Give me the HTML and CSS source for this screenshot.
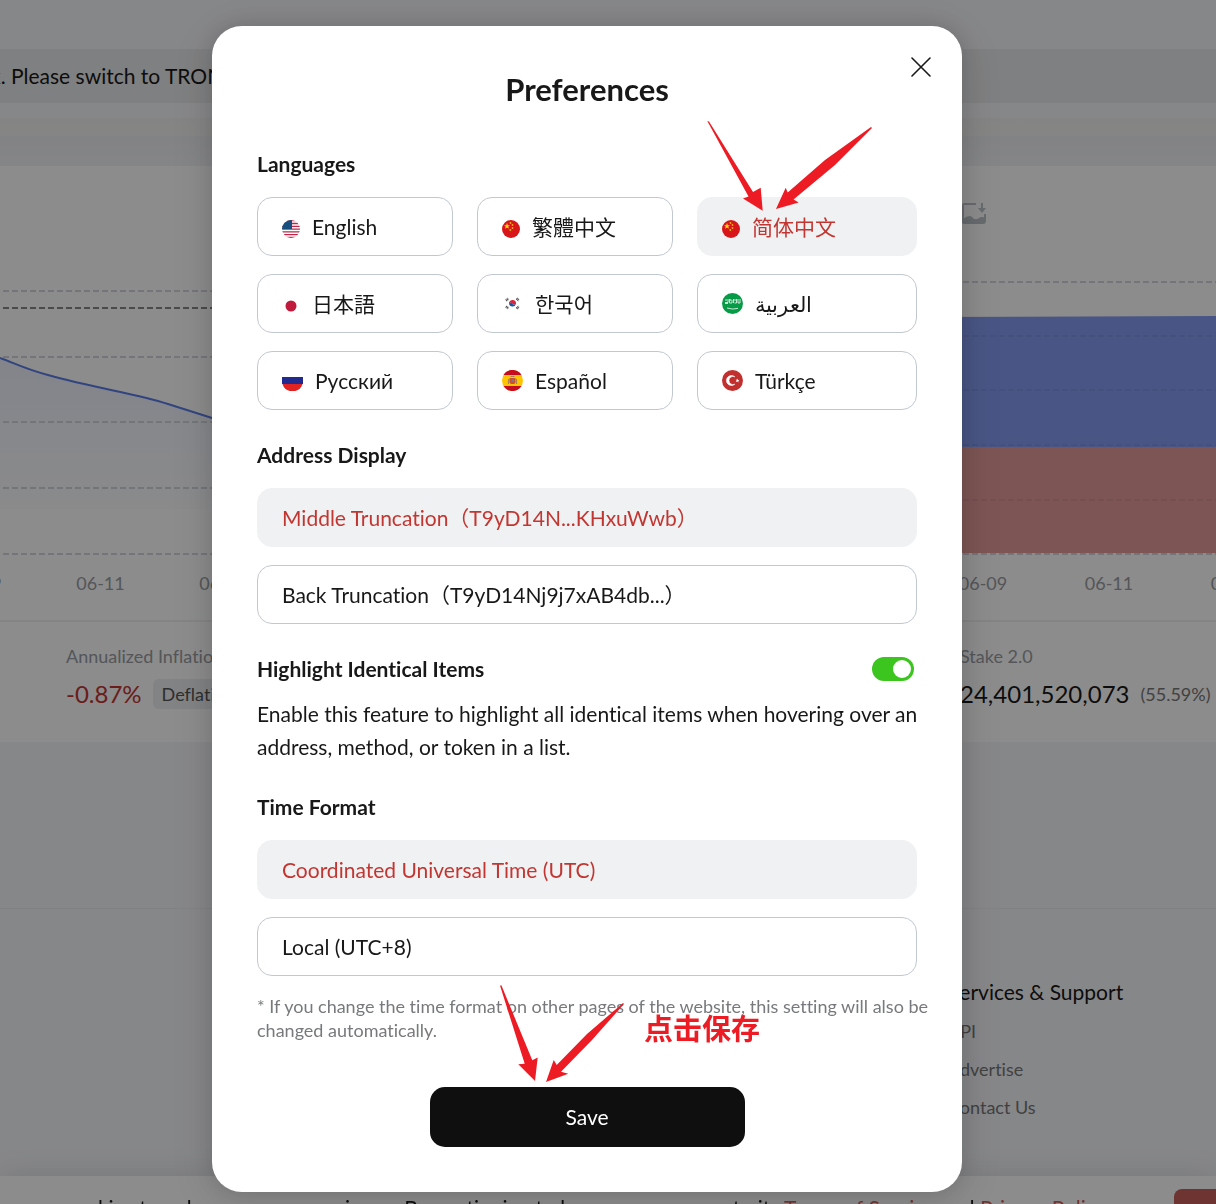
FILE: index.html
```html
<!DOCTYPE html>
<html lang="en">
<head>
<meta charset="utf-8">
<meta name="viewport" content="width=device-width, initial-scale=1">
<title>Preferences</title>
<link rel="stylesheet" href="styles.css">
</head>
<body>
<div class="page">
  <div class="notice">k. Please switch to TRON</div>
  <div class="header-edge"></div>
  <main class="charts">
    <section class="panel">
      <svg class="chart" viewBox="0 0 608 408" preserveAspectRatio="xMinYMin slice" aria-hidden="true">
        <defs>
          <linearGradient id="fade" x1="0" y1="0" x2="0" y2="1">
            <stop offset="0" stop-color="#5c7df0" stop-opacity=".1"/>
            <stop offset="1" stop-color="#5c7df0" stop-opacity=".02"/>
          </linearGradient>
        </defs>
        <path d="M0 192C14 197 28 204 48 209C98 223 135 227 168 238L212 252L608 300V343H0Z" fill="url(#fade)"/>
        <g class="grid-lines">
          <path d="M3 125H608M3 191H608M3 256H608M3 322H608M3 388H608"/>
          <path class="grid-dark" d="M3 142H608"/>
        </g>
        <path d="M0 192C14 197 28 204 48 209C98 223 135 227 168 238L212 252L608 300" fill="none" stroke="#5c7de8" stroke-width="2"/>
      </svg>
      <div class="axis axis-left"><span>06-09</span><span>06-11</span><span>06-13</span></div>
      <div class="stat stat-left">
        <div class="stat-name">Annualized Inflation</div>
        <div class="stat-row"><strong class="down">-0.87%</strong><span class="chip">Deflation</span></div>
      </div>
    </section>
    <section class="panel">
      <svg class="chart" viewBox="0 0 608 408" preserveAspectRatio="xMaxYMin slice" aria-hidden="true">
        <path d="M0 152L608 150V281H0Z" fill="#859cf2"/>
        <path d="M0 281H608V387H0Z" fill="#e39b99"/>
        <g class="grid-lines">
          <path d="M4 116H608M4 388H608"/>
          <path class="grid-faint" d="M4 170H608M4 224H608M4 279H608M4 334H608"/>
        </g>
        <g fill="none" stroke="#bbc3ca" stroke-width="2">
          <path d="M368 38H356Q355 38 355 39V56Q355 57 356 57H375Q377 57 377 55V48"/>
        </g>
        <path d="M373 37H375V42H378L374 47L370 42H373Z" fill="#bbc3ca"/>
        <path d="M355 53Q361 48 364 51Q367 55 371 52Q374 50 377 52V57H355Z" fill="#bbc3ca"/>
      </svg>
      <div class="axis axis-right"><span>06-09</span><span>06-11</span><span>06-13</span></div>
      <div class="stat stat-right">
        <div class="stat-name">Stake 2.0</div>
        <div class="stat-row"><strong>24,401,520,073</strong><span class="share">(55.59%)</span></div>
      </div>
    </section>
  </main>
  <footer class="footer">
    <nav class="footer-col">
      <h2>Services &amp; Support</h2>
      <a href="#">API</a>
      <a href="#">Advertise</a>
      <a href="#">Contact Us</a>
    </nav>
  </footer>
</div>

<div class="cookies">
  <p>te uses cookies to enhance your experience. By continuing to browse, you agree to its <a href="#">Terms of Service</a> and <a href="#">Privacy Policy</a></p>
  <button type="button">Confirm</button>
</div>

<div class="overlay">
  <form class="dialog" role="dialog" aria-labelledby="dialog-title">
    <button class="close" type="button" aria-label="Close">
      <svg width="20" height="20" viewBox="0 0 20 20" aria-hidden="true"><path d="M1 1L19 19M19 1L1 19" stroke="#181818" stroke-width="1.6" stroke-linecap="round"/></svg>
    </button>
    <h1 id="dialog-title">Preferences</h1>

    <fieldset>
      <legend>Languages</legend>
      <div class="languages">
        <label class="option"><input type="radio" name="lang">
          <svg class="flag flag-small" viewBox="0 0 18 18" aria-hidden="true"><clipPath id="c18"><circle cx="9" cy="9" r="9"/></clipPath><g clip-path="url(#c18)"><path d="M0 0H18V18H0Z" fill="#fff"/><path d="M0 .7H18M0 3.5H18M0 6.3H18M0 9.1H18M0 11.9H18M0 14.7H18M0 17.4H18" stroke="#c02747" stroke-width="1.3"/><path d="M0 0H10V9H0Z" fill="#17507f"/></g></svg>
          <span>English</span></label>
        <label class="option"><input type="radio" name="lang">
          <svg class="flag flag-small" viewBox="0 0 18 18" aria-hidden="true"><circle cx="9" cy="9" r="9" fill="#d81518"/><path d="M5 3L5.800 5.200H8L6.300 6.500L6.900 8.800L5 7.500L3.100 8.800L3.700 6.500L2 5.200H4.200Z" fill="#f8dc10"/><g fill="#f0b414"><circle cx="8.5" cy="3" r=".9"/><circle cx="10.5" cy="5" r=".9"/><circle cx="10.5" cy="8" r=".9"/><circle cx="8.3" cy="10" r=".9"/></g></svg>
          <span lang="zh-TW">繁體中文</span></label>
        <label class="option"><input type="radio" name="lang" checked>
          <svg class="flag flag-small" viewBox="0 0 18 18" aria-hidden="true"><circle cx="9" cy="9" r="9" fill="#d81518"/><path d="M5 3L5.800 5.200H8L6.300 6.500L6.900 8.800L5 7.500L3.100 8.800L3.700 6.500L2 5.200H4.200Z" fill="#f8dc10"/><g fill="#f0b414"><circle cx="8.5" cy="3" r=".9"/><circle cx="10.5" cy="5" r=".9"/><circle cx="10.5" cy="8" r=".9"/><circle cx="8.3" cy="10" r=".9"/></g></svg>
          <span lang="zh-CN">简体中文</span></label>
        <label class="option"><input type="radio" name="lang">
          <svg class="flag flag-small" viewBox="0 0 18 18" aria-hidden="true"><circle cx="9" cy="9" r="5.5" fill="#c01a3c"/></svg>
          <span lang="ja">日本語</span></label>
        <label class="option"><input type="radio" name="lang">
          <svg class="flag" viewBox="0 0 21 21" aria-hidden="true"><path d="M7 9.5A3.6 3.6 0 0 1 14 11Q12 12.500 10.500 11Q9 9 7 10.500Z" fill="#d7263d"/><path d="M7 10.500Q9 9 10.500 11Q12 12.500 14 11A3.600 3.600 0 0 1 7 10.500Z" fill="#1456a0"/><g stroke="#444" stroke-width="2.400" stroke-dasharray="1 .5"><path d="M4 7.500L6.500 5.500M14.500 5.500L17 7.500M4 13.500L6.500 15.500M14.500 15.500L17 13.500"/></g></svg>
          <span lang="ko">한국어</span></label>
        <label class="option"><input type="radio" name="lang">
          <svg class="flag" viewBox="0 0 21 21" aria-hidden="true"><circle cx="10.500" cy="10.500" r="10.500" fill="#079b48"/><g fill="none" stroke="#d9f2e2" stroke-width=".9"><path d="M3 9.500H6V6M4 6V8M7.500 6V10H10V7M8.800 6V8M11.500 6V10M12.500 10H14.500V6M13 6V8M16 6V10H18V6M3 10.500H6"/><path d="M5 15Q11 17 16 15.300"/></g></svg>
          <span lang="ar" dir="rtl">العربية</span></label>
        <label class="option"><input type="radio" name="lang">
          <svg class="flag" viewBox="0 0 21 21" aria-hidden="true"><path d="M0 7H21V14H0Z" fill="#232a8f"/><path d="M.5 14H20.500A10.500 10.500 0 0 1 .5 14Z" fill="#e32322"/></svg>
          <span lang="ru">Русский</span></label>
        <label class="option"><input type="radio" name="lang">
          <svg class="flag" viewBox="0 0 21 21" aria-hidden="true"><circle cx="10.500" cy="10.500" r="10.500" fill="#ffc400"/><path d="M1.500 5A10.500 10.500 0 0 1 19.500 5ZM1.500 16A10.500 10.500 0 0 0 19.500 16Z" fill="#c60c1e"/><path d="M7.500 8H13.500V12Q13.500 14 10.500 14T7.500 12Z" fill="#c9512c"/><path d="M6.500 9V14M14.500 9V14M8.500 6.500H12.500" stroke="#a8835c" stroke-width="1.200"/><path d="M9.500 9.500H12V11.500H9.500Z" fill="#777b92"/></svg>
          <span lang="es">Español</span></label>
        <label class="option"><input type="radio" name="lang">
          <svg class="flag" viewBox="0 0 21 21" aria-hidden="true"><circle cx="10.500" cy="10.500" r="10.500" fill="#c1302f"/><path d="M12.800 6.800A5 5 0 1 0 12.800 14.200A4.100 4.100 0 1 1 12.800 6.800Z" fill="#fff" stroke="#fff" stroke-width=".6"/><path d="M15.500 8.500L16 10L17.500 10.200L16.300 11L16.500 12.500L15.300 11.500L13.800 12L14.500 10.600L13.700 9.500L15 9.700Z" fill="#fff"/></svg>
          <span lang="tr">Türkçe</span></label>
      </div>
    </fieldset>

    <fieldset>
      <legend>Address Display</legend>
      <div class="stack">
        <label class="option"><input type="radio" name="address" checked><span>Middle Truncation（T9yD14N...KHxuWwb）</span></label>
        <label class="option"><input type="radio" name="address"><span>Back Truncation（T9yD14Nj9j7xAB4db...）</span></label>
      </div>
    </fieldset>

    <div class="highlight">
      <div class="highlight-head">
        <label for="highlight">Highlight Identical Items</label>
        <input class="switch" id="highlight" type="checkbox" role="switch" checked>
      </div>
      <p>Enable this feature to highlight all identical items when hovering over an address, method, or token in a list.</p>
    </div>

    <fieldset>
      <legend>Time Format</legend>
      <div class="stack">
        <label class="option"><input type="radio" name="time" checked><span>Coordinated Universal Time (UTC)</span></label>
        <label class="option"><input type="radio" name="time"><span>Local (UTC+8)</span></label>
      </div>
    </fieldset>
    <p class="note">* If you change the time format on other pages of the website, this setting will also be changed automatically.</p>
    <button class="save" type="button">Save</button>

    <svg class="arrows" viewBox="212 26 750 1166" aria-hidden="true">
      <path d="M707.300 121L709 121.500L753 192L760.700 187.700L762.700 210.700L743 198.500L748.500 196.500Z"/>
      <path d="M871 127L872 128L835 165L793.500 199.500L798.700 202.500L776 209L785.700 187.700L787.700 192.500L825 160Z"/>
      <path d="M500 985.500L501.500 985.500L532.300 1060.300L537.700 1057.500L535 1081L518.300 1064.300L524.700 1063.700Z"/>
      <path d="M623 1003L624 1004L592 1040L561 1071.700L568.300 1073.700L546 1082L553.700 1060L556.700 1065L587 1034Z"/>
    </svg>
    <span class="callout" lang="zh-CN">点击保存</span>
  </form>
</div>
</body>
</html>
```
FILE: styles.css
```css
* {
  box-sizing: border-box;
}

body {
  margin: 0;
  font-family: Lato, "Noto Sans CJK SC", "Noto Sans", sans-serif;
  font-size: 21px;
  line-height: 30px;
  font-variant-ligatures: none;
  color: #181818;
  background: #f5f6f9;
}

h1, h2, p, fieldset, legend {
  margin: 0;
  padding: 0;
  border: 0;
}

a {
  text-decoration: none;
}

/* Page behind the dialog */
.page {
  height: 100vh;
  overflow: hidden;
  padding-top: 49px;
}

.notice {
  padding: 12px 0;
  background: #e8e9eb;
  text-indent: -10px;
  white-space: nowrap;
}

.header-edge {
  height: 63px;
  background: linear-gradient(#f5f6f9 15px, #f2f1f1 15px, #f4f3f2 33px, #edeef1 33px, #f2f3f6);
}

.charts {
  display: grid;
  grid-template-columns: 1fr 1fr;
  height: 576px;
  background: #fff;
}

.panel {
  min-width: 0;
}

.chart {
  display: block;
  width: 100%;
  height: 402px;
}

.grid-lines {
  fill: none;
  stroke: #d4d6dc;
  stroke-width: 2;
  stroke-dasharray: 6 3;
}

.grid-dark {
  stroke: #888;
}

.grid-faint {
  stroke: #283048;
  stroke-opacity: .08;
}

.axis {
  display: flex;
  height: 52px;
  font-size: 18px;
  color: #999da3;
}

.axis span {
  flex: none;
  text-align: center;
}

.axis-left {
  margin-left: -84px;
}

.axis-left span {
  width: 123px;
}

.axis-right {
  justify-content: flex-end;
  margin-right: -82px;
}

.axis-right span {
  width: 126px;
}

.stat {
  border-top: 2px solid #f0f1f3;
  padding-top: 19px;
}

.stat-left {
  padding-left: 66px;
}

.stat-right {
  padding-left: 352px;
}

.stat-name {
  font-size: 18px;
  color: #999da3;
}

.stat-row {
  display: flex;
  align-items: center;
  gap: 11px;
  margin-top: 8px;
  white-space: nowrap;
}

.stat-row strong {
  font-size: 24px;
  font-weight: 400;
}

.stat-row .down {
  color: #c23631;
}

.chip {
  padding: 0 9px;
  border-radius: 6px;
  background: #eceef0;
  font-size: 18px;
  color: #555;
}

.share {
  font-size: 18px;
  color: #777;
}

.footer {
  display: flex;
  justify-content: flex-end;
  margin-top: 166px;
  border-top: 1px solid #ebecef;
  padding-top: 68px;
}

.footer-col {
  width: 268px;
}

.footer-col h2 {
  margin-bottom: 5px;
  font-size: 21px;
  font-weight: 400;
}

.footer-col a {
  display: block;
  font-size: 18px;
  line-height: 38px;
  color: #777;
}

.cookies {
  position: fixed;
  right: 0;
  bottom: 0;
  left: 0;
  display: flex;
  justify-content: space-between;
  height: 28px;
  overflow: hidden;
  padding-top: 13px;
  background: #fff;
  box-shadow: 0 0 30px rgba(0, 0, 0, .12);
  white-space: nowrap;
}

.cookies p {
  padding-top: 4px;
  text-indent: -6px;
}

.cookies a {
  color: #d2615d;
}

.cookies button {
  flex: none;
  width: 42px;
  height: 45px;
  border: 0;
  border-radius: 8px 0 0 8px;
  padding: 0 0 0 26px;
  background: #c9605c;
  font: inherit;
  text-align: left;
  color: #fff;
}

/* Dialog */
.overlay {
  position: fixed;
  inset: 0;
  overflow: hidden;
  padding: 26px 42px 0 0;
  background: rgba(0, 0, 0, .45);
}

.dialog {
  position: relative;
  max-width: 750px;
  margin: 0 auto;
  padding: 45px;
  border-radius: 30px;
  background: #fff;
  box-shadow: 0 9px 42px 12px rgba(0, 0, 0, .08), 0 0 24px rgba(0, 0, 0, .14);
}

.close {
  position: absolute;
  top: 31px;
  right: 31px;
  display: flex;
  border: 0;
  padding: 0;
  background: none;
}

.dialog h1 {
  margin-bottom: 45px;
  font-size: 31px;
  line-height: 36px;
  text-align: center;
}

legend,
.highlight-head {
  font-weight: 700;
  line-height: 24px;
}

legend {
  margin-bottom: 20px;
}

fieldset {
  margin-bottom: 33px;
  padding-top: 1px;
}

.languages {
  display: grid;
  grid-template-columns: 1fr 1fr 220px;
  gap: 18px 24px;
}

.stack {
  display: grid;
  gap: 18px;
}

.option {
  display: flex;
  align-items: center;
  gap: 12px;
  height: 59px;
  padding: 0 24px;
  border: 1px solid #c2c8d0;
  border-radius: 15px;
}

.option input {
  position: absolute;
  opacity: 0;
  pointer-events: none;
}

.option:has(:checked) {
  border-color: #f0f1f3;
  background: #f0f1f3;
  color: #c23631;
}

.flag {
  flex: none;
  width: 21px;
  height: 21px;
}

.flag-small {
  width: 18px;
  height: 18px;
  margin-top: 4px;
}

.highlight {
  margin-bottom: 32px;
}

.highlight-head {
  display: flex;
  align-items: center;
  justify-content: space-between;
  margin-bottom: 16px;
  padding-right: 3px;
}

.highlight p {
  margin-right: -16px;
  line-height: 33px;
}

.switch {
  appearance: none;
  display: flex;
  justify-content: flex-end;
  width: 42px;
  height: 24px;
  margin: 0;
  padding: 3px;
  border-radius: 12px;
  background: #3cc51f;
}

.switch::before {
  content: "";
  width: 18px;
  height: 18px;
  border-radius: 50%;
  background: #fff;
}

.note {
  margin-top: -15px;
  margin-right: -20px;
  font-size: 18px;
  line-height: 24px;
  color: #77797c;
}

.save {
  display: block;
  width: 315px;
  height: 60px;
  margin: 45px auto 0;
  border: 0;
  border-radius: 15px;
  background: #0f0f0f;
  font: inherit;
  color: #fff;
}

/* Hand-drawn marks over the dialog */
.arrows {
  position: absolute;
  inset: 0;
  width: 100%;
  height: 100%;
  fill: #ed1c24;
  pointer-events: none;
}

.callout {
  position: absolute;
  top: 986px;
  left: 432px;
  font-family: "Noto Sans CJK SC", sans-serif;
  font-size: 29px;
  font-weight: 700;
  color: #ed1c24;
}
```
